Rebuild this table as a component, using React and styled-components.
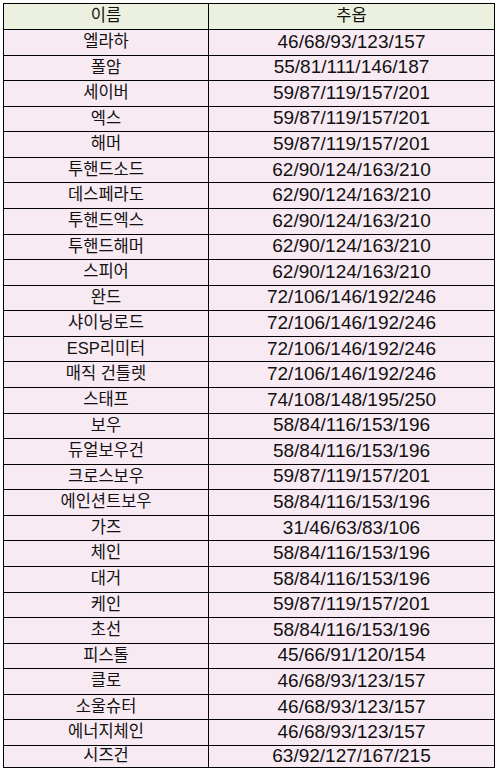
import React from "react";
import styled, { createGlobalStyle } from "styled-components";

const GlobalStyle = createGlobalStyle`
  html, body {
    margin: 0;
    padding: 0;
    background: #ffffff;
  }
  body {
    font-family: "Liberation Sans", "Noto Sans CJK KR", sans-serif;
  }
`;

const Page = styled.div`
  padding: 3px 0 0 3px;
`;

const Table = styled.div`
  display: grid;
  grid-template-columns: 204px 285px;
  grid-template-rows: 25px repeat(28, 1fr);
  gap: 1px;
  padding: 1px;
  width: 492px;
  height: 765px;
  box-sizing: border-box;
  background: #000000;
`;

const Cell = styled.div`
  display: flex;
  align-items: center;
  justify-content: center;
  padding-bottom: 2px;
  box-sizing: border-box;
  background: ${(p) => (p.$head ? "#ebf1de" : "#f8eaf3")};
  color: #111111;
  font-size: ${(p) => (p.$name ? "16.5px" : "19px")};
  line-height: 1;
  white-space: nowrap;
`;

const rows = [
  ["엘라하", "46/68/93/123/157"],
  ["폴암", "55/81/111/146/187"],
  ["세이버", "59/87/119/157/201"],
  ["엑스", "59/87/119/157/201"],
  ["해머", "59/87/119/157/201"],
  ["투핸드소드", "62/90/124/163/210"],
  ["데스페라도", "62/90/124/163/210"],
  ["투핸드엑스", "62/90/124/163/210"],
  ["투핸드해머", "62/90/124/163/210"],
  ["스피어", "62/90/124/163/210"],
  ["완드", "72/106/146/192/246"],
  ["샤이닝로드", "72/106/146/192/246"],
  ["ESP리미터", "72/106/146/192/246"],
  ["매직 건틀렛", "72/106/146/192/246"],
  ["스태프", "74/108/148/195/250"],
  ["보우", "58/84/116/153/196"],
  ["듀얼보우건", "58/84/116/153/196"],
  ["크로스보우", "59/87/119/157/201"],
  ["에인션트보우", "58/84/116/153/196"],
  ["가즈", "31/46/63/83/106"],
  ["체인", "58/84/116/153/196"],
  ["대거", "58/84/116/153/196"],
  ["케인", "59/87/119/157/201"],
  ["초선", "58/84/116/153/196"],
  ["피스톨", "45/66/91/120/154"],
  ["클로", "46/68/93/123/157"],
  ["소울슈터", "46/68/93/123/157"],
  ["에너지체인", "46/68/93/123/157"],
  ["시즈건", "63/92/127/167/215"],
];

const App = () => {
  return (
    <Page>
      <GlobalStyle />
      <Table>
        <Cell $head $name>이름</Cell>
        <Cell $head $name>추옵</Cell>
        {rows.map(([name, value]) => (
          <React.Fragment key={name}>
            <Cell $name>{name}</Cell>
            <Cell>{value}</Cell>
          </React.Fragment>
        ))}
      </Table>
    </Page>
  );
};

export default App;
